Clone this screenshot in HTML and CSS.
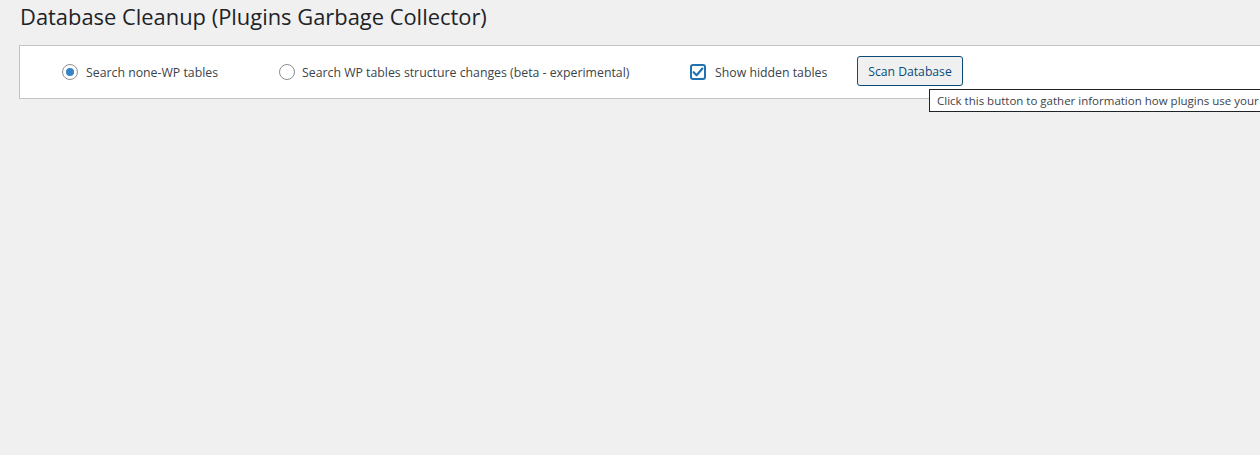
FILE: index.html
```html
<!DOCTYPE html>
<html lang="en">
<head>
<meta charset="utf-8">
<title>Database Cleanup</title>
<link rel="stylesheet" href="styles.css">
</head>
<body>
<div class="wrap">
  <h1 class="title">Database Cleanup (Plugins Garbage Collector)</h1>
  <div class="panel">
    <label class="opt opt-1"><span class="radio checked"></span><span class="lbl">Search none-WP tables</span></label>
    <label class="opt opt-2"><span class="radio"></span><span class="lbl">Search WP tables structure changes (beta - experimental)</span></label>
    <label class="opt opt-3"><span class="check"><svg viewBox="0 0 16 16" width="16" height="16"><path d="M3.6 8.2 L6.6 11.2 L12.4 4.6" fill="none" stroke="#2271b1" stroke-width="2.2" stroke-linecap="round" stroke-linejoin="round"/></svg></span><span class="lbl">Show hidden tables</span></label>
    <div class="btn-wrap">
      <button class="button">Scan Database</button>
      <div class="tooltip">Click this button to gather information how plugins use your</div>
    </div>
  </div>
</div>
</body>
</html>
```

FILE: styles.css
```css
html, body {
  margin: 0;
  padding: 0;
  background: #f0f0f1;
  overflow: hidden;
  height: 455px;
}
body {
  font-family: "Open Sans", "Noto Sans", sans-serif;
  color: #3c434a;
  font-size: 13px;
}
.wrap {
  padding: 0 0 0 19px;
}
.title {
  margin: 0;
  padding: 2px 0 0 1px;
  font-size: 21.9px;
  font-weight: 400;
  line-height: 30px;
  color: #1d2327;
  height: 43px;
  white-space: nowrap;
}
.panel {
  position: relative;
  display: flex;
  align-items: center;
  margin-right: -40px;
  background: #fff;
  border: 1px solid #c3c4c7;
  padding-left: 42px;
  box-sizing: border-box;
  height: 54px;
}
.opt {
  display: flex;
  align-items: center;
  flex: none;
}
.opt-1 { width: 217px; }
.opt-2 { width: 411px; }
.opt-3 { width: 167px; }
.radio {
  width: 16px;
  height: 16px;
  box-sizing: border-box;
  border: 1px solid #8c8f94;
  border-radius: 50%;
  margin-right: 8px;
  display: flex;
  align-items: center;
  justify-content: center;
  flex: none;
}
.opt-2 .radio { margin-right: 7px; }
.radio.checked::after {
  content: "";
  width: 8px;
  height: 8px;
  border-radius: 50%;
  background: #3582c4;
}
.check {
  width: 16px;
  height: 16px;
  box-sizing: border-box;
  border: 2px solid #2271b1;
  border-radius: 3px;
  margin-right: 9px;
  display: flex;
  align-items: center;
  justify-content: center;
  flex: none;
  overflow: hidden;
}
.check svg {
  display: block;
  flex: none;
}
.lbl {
  white-space: nowrap;
  color: #3c434a;
  font-size: 12.3px;
  line-height: 18px;
  padding-top: 1px;
}
.btn-wrap {
  position: relative;
  flex: none;
}
.button {
  display: block;
  font-family: inherit;
  font-size: 12.2px;
  height: 30px;
  width: 106px;
  padding: 0 9px;
  background: #f0f0f1;
  color: #0a4b78;
  border: 1px solid #0a4b78;
  border-radius: 3px;
  margin-top: -2px;
  cursor: pointer;
}
.tooltip {
  position: absolute;
  left: 72px;
  top: 31px;
  height: 23px;
  box-sizing: border-box;
  padding: 0 40px 0 7px;
  line-height: 21px;
  font-size: 11.5px;
  white-space: nowrap;
  background: #fff;
  color: #3c434a;
  border: 1px solid #1d2327;
  z-index: 2;
}
```
